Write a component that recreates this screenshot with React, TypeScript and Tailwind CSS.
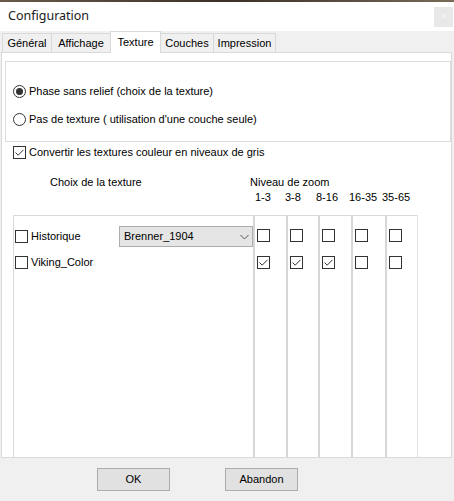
import React from "react";

function Check({ checked = false }: { checked?: boolean }) {
  return (
    <span className="w-[13px] h-[13px] border border-[#333333] bg-white flex items-center justify-center shrink-0">
      {checked && (
        <svg width="11" height="11" viewBox="0 0 11 11">
          <path d="M1.5 5.5 L4.2 8.2 L9.5 2.8" fill="none" stroke="#333333" strokeWidth="1" />
        </svg>
      )}
    </span>
  );
}

function Radio({ checked = false }: { checked?: boolean }) {
  return (
    <span className="w-[13px] h-[13px] rounded-full border border-[#333333] bg-white flex items-center justify-center shrink-0">
      {checked && <span className="w-[7px] h-[7px] rounded-full bg-[#333333]" />}
    </span>
  );
}

const tabs = [
  { label: "Général", w: "w-[50px]" },
  { label: "Affichage", w: "w-[60px]" },
  { label: "Texture", w: "w-[51px]" },
  { label: "Couches", w: "w-[54px]" },
  { label: "Impression", w: "w-[63px]" },
];
const columnChecks = [
  [false, true],
  [false, true],
  [false, true],
  [false, false],
  [false, false],
];
const colWidths = ["w-[33px]", "w-[32px]", "w-[33px]", "w-[34px]", "w-[32px]"];

export default function App() {
  return (
    <div
      className="w-[454px] h-[501px] bg-[#f0f0f0] flex flex-col overflow-hidden text-[11px] text-black"
      style={{ fontFamily: '"Liberation Sans", Arial, sans-serif' }}
    >
      {/* strip of desktop behind */}
      <div className="h-[2px] bg-gradient-to-r from-[#6b5a4a] via-[#3b3128] to-[#7a6a58]" />

      {/* title bar */}
      <div className="h-[29px] bg-white flex items-center justify-between pl-[8px] pr-[1px]">
        <span className="text-[12.5px] text-[#1a1a1a]" style={{ fontFamily: '"Noto Sans", "Liberation Sans", sans-serif' }}>
          Configuration
        </span>
        <div className="w-[19px] h-[20px] bg-[#e8e8e8] flex items-center justify-center text-[10px] text-[#f6f6f6]">
          ×
        </div>
      </div>

      {/* tabs */}
      <div className="h-[21px] flex items-end pl-[2px]">
        {tabs.map((t) =>
          t.label === "Texture" ? (
            <div
              key={t.label}
              className={`${t.w} h-[22px] -mb-[1px] -ml-[1px] z-10 flex items-center justify-center bg-white border border-b-0 border-[#d9d9d9]`}
            >
              {t.label}
            </div>
          ) : (
            <div
              key={t.label}
              className={`${t.w} h-[19px] flex items-center justify-center bg-[#f0f0f0] border border-b-0 border-[#d9d9d9] -ml-[1px] first:ml-0`}
            >
              {t.label}
            </div>
          )
        )}
      </div>

      {/* tab panel */}
      <div className="ml-[1px] w-[451px] h-[406px] bg-white border border-[#d9d9d9] flex flex-col pl-[2px]">
        <div className="mt-[8px] ml-[1px] w-[446px] h-[81px] border border-[#dcdcdc] flex flex-col pl-[7px] pt-[23px] gap-[15px]">
          <div className="flex items-center gap-[3px] h-[13px]">
            <Radio checked />
            <span>Phase sans relief (choix de la texture)</span>
          </div>
          <div className="flex items-center gap-[3px] h-[13px]">
            <Radio />
            <span>Pas de texture ( utilisation d'une couche seule)</span>
          </div>
        </div>

        <div className="mt-[4px] ml-[9px] flex items-center gap-[3px] h-[13px]">
          <Check checked />
          <span>Convertir les textures couleur en niveaux de gris</span>
        </div>

        <div className="mt-[17px] flex h-[13px] items-center">
          <span className="ml-[46px] w-[200px]">Choix de la texture</span>
          <span>Niveau de zoom</span>
        </div>
        <div className="mt-[2px] flex h-[13px] items-center">
          <span className="ml-[251px] w-[30px]">1-3</span>
          <span className="w-[31px]">3-8</span>
          <span className="w-[33px]">8-16</span>
          <span className="w-[33px]">16-35</span>
          <span>35-65</span>
        </div>

        {/* table */}
        <div className="mt-[11px] ml-[9px] flex flex-1">
          <div className="w-[240px] border-l border-t border-[#d9d9d9] flex flex-col pt-[10px]">
            <div className="flex items-center h-[21px]">
              <div className="ml-[1px] flex items-center gap-[3px] w-[104px]">
                <Check />
                <span>Historique</span>
              </div>
              <div className="w-[134px] h-[21px] bg-[#e5e5e5] border border-[#adadad] flex items-center justify-between pl-[4px] pr-[3px]">
                <span>Brenner_1904</span>
                <svg width="9" height="6" viewBox="0 0 9 6">
                  <path d="M0.5 1 L4.5 5 L8.5 1" fill="none" stroke="#555555" strokeWidth="1" />
                </svg>
              </div>
            </div>
            <div className="mt-[9px] ml-[1px] flex items-center gap-[3px] h-[13px]">
              <Check />
              <span>Viking_Color</span>
            </div>
          </div>
          {columnChecks.map((col, i) => (
            <div
              key={i}
              className={`${colWidths[i]} border-l-2 border-t border-[#d6d6d6] border-t-[#d9d9d9] flex flex-col pt-[13px] pl-[2px] gap-[14px]`}
            >
              <Check checked={col[0]} />
              <Check checked={col[1]} />
            </div>
          ))}
          <div className="w-[1px] bg-[#e3e3e3]" />
        </div>
      </div>

      {/* buttons */}
      <div className="flex mt-[10px] h-[23px]">
        <button className="ml-[97px] w-[73px] h-[23px] bg-[#e1e1e1] border border-[#adadad] text-[11px]">
          OK
        </button>
        <button className="ml-[55px] w-[73px] h-[23px] bg-[#e1e1e1] border border-[#adadad] text-[11px]">
          Abandon
        </button>
      </div>
    </div>
  );
}
